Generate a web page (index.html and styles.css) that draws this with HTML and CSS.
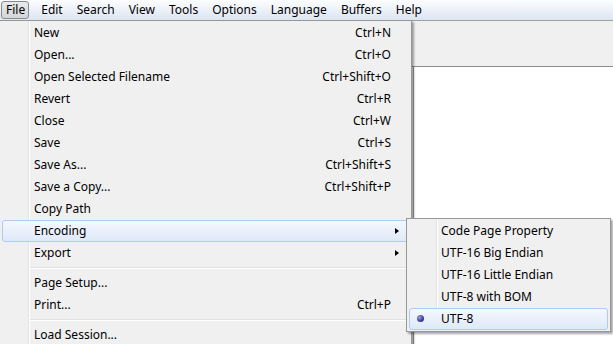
FILE: index.html
```html
<!DOCTYPE html>
<html lang="en">
<head>
    <meta charset="UTF-8">
    <title>SciTE - File menu</title>
    <link rel="stylesheet" href="styles.css">
</head>
<body>
    <div class="window">
        <!-- Menu bar -->
        <div class="menubar">
            <span class="menubar-item open">File</span>
            <span class="menubar-item">Edit</span>
            <span class="menubar-item">Search</span>
            <span class="menubar-item">View</span>
            <span class="menubar-item">Tools</span>
            <span class="menubar-item">Options</span>
            <span class="menubar-item">Language</span>
            <span class="menubar-item">Buffers</span>
            <span class="menubar-item">Help</span>
        </div>

        <!-- Area behind the menu -->
        <div class="workspace">
            <div class="toolbar"></div>
            <div class="editor">
                <div class="margin"></div>
                <div class="text-area"></div>
            </div>
        </div>

        <!-- File dropdown -->
        <div class="menu file-menu">
            <div class="menu-item"><span class="label">New</span><span class="shortcut">Ctrl+N</span></div>
            <div class="menu-item"><span class="label">Open...</span><span class="shortcut">Ctrl+O</span></div>
            <div class="menu-item"><span class="label">Open Selected Filename</span><span class="shortcut">Ctrl+Shift+O</span></div>
            <div class="menu-item"><span class="label">Revert</span><span class="shortcut">Ctrl+R</span></div>
            <div class="menu-item"><span class="label">Close</span><span class="shortcut">Ctrl+W</span></div>
            <div class="menu-item"><span class="label">Save</span><span class="shortcut">Ctrl+S</span></div>
            <div class="menu-item"><span class="label">Save As...</span><span class="shortcut">Ctrl+Shift+S</span></div>
            <div class="menu-item"><span class="label">Save a Copy...</span><span class="shortcut">Ctrl+Shift+P</span></div>
            <div class="menu-item"><span class="label">Copy Path</span></div>
            <div class="menu-item active"><span class="label">Encoding</span><span class="arrow"></span></div>
            <div class="menu-item"><span class="label">Export</span><span class="arrow"></span></div>
            <div class="separator"></div>
            <div class="menu-item"><span class="label">Page Setup...</span></div>
            <div class="menu-item"><span class="label">Print...</span><span class="shortcut">Ctrl+P</span></div>
            <div class="separator"></div>
            <div class="menu-item"><span class="label">Load Session...</span></div>
        </div>

        <!-- Encoding submenu -->
        <div class="menu sub-menu">
            <div class="menu-item"><span class="label">Code Page Property</span></div>
            <div class="menu-item"><span class="label">UTF-16 Big Endian</span></div>
            <div class="menu-item"><span class="label">UTF-16 Little Endian</span></div>
            <div class="menu-item"><span class="label">UTF-8 with BOM</span></div>
            <div class="menu-item active"><span class="radio"></span><span class="label">UTF-8</span></div>
        </div>
    </div>
</body>
</html>
```

FILE: styles.css
```css
body {
    margin: 0;
    font-family: "Noto Sans", "Open Sans", sans-serif;
    font-size: 12px;
    color: #000;
    background-color: #fff;
}

.window {
    position: relative;
    width: 613px;
    height: 344px;
    overflow: hidden;
}

/* Menu bar */

.menubar {
    display: flex;
    height: 20px;
    padding-left: 1px;
    background: linear-gradient(#fcfdfe, #dce5f3);
    box-sizing: border-box;
}

.menubar-item {
    display: flex;
    align-items: center;
    height: 18px;
    margin-top: 1px;
    padding: 0 6px 1px;
    border: 1px solid transparent;
    box-sizing: border-box;
    line-height: 1;
}

.menubar-item.open {
    border-color: #8a8b8d;
    border-radius: 3px;
    background: linear-gradient(#e8e9eb, #d3d5d8);
    padding: 0 3px 1px 4px;
    margin-right: 5px;
}

/* Workspace behind the menu */

.workspace {
    display: flex;
    flex-direction: column;
    height: 324px;
}

.toolbar {
    height: 45px;
    background-color: #f0f0f0;
    border-top: 1px solid #a0a0a0;
    border-bottom: 1px solid #8c8c8c;
}

.editor {
    display: flex;
    flex: 1;
}

.margin {
    width: 413px;
    background-color: #f0f0f0;
    border-right: 1px solid #9a9a9a;
}

.text-area {
    flex: 1;
    background-color: #fff;
}

/* Menus */

.menu {
    position: absolute;
    background-color: #f0f0f0;
    border: 1px solid #979797;
    padding: 1px 0;
    box-shadow: 2px 2px 2px rgba(0, 0, 0, 0.35);
    background-image: linear-gradient(90deg, transparent 28px, #e2e3e3 28px, #e2e3e3 29px, #fff 29px, #fff 30px, transparent 30px);
}

.file-menu {
    left: -1px;
    top: 20px;
    width: 411px;
    height: 340px;
}

.sub-menu {
    left: 406px;
    top: 218px;
    width: 203px;
    background-image: linear-gradient(90deg, transparent 29px, #e2e3e3 29px, #e2e3e3 30px, #fff 30px, #fff 31px, transparent 31px);
}

.menu-item {
    position: relative;
    display: flex;
    align-items: center;
    height: 22px;
    padding-left: 35px;
    padding-right: 17px;
    padding-bottom: 2px;
    margin: 0 2px;
    border: 1px solid transparent;
    border-radius: 3px;
    box-sizing: border-box;
}

.file-menu .menu-item {
    padding-left: 31px;
}

.sub-menu .menu-item {
    padding-left: 31px;
}

.menu-item.active {
    border-color: #aecbf0;
    background: linear-gradient(#f4f8fd, #dfe9f8);
}

.label {
    flex: 1;
    white-space: nowrap;
}

.shortcut {
    white-space: nowrap;
}

.arrow {
    position: absolute;
    right: 9px;
    top: 7px;
    width: 0;
    height: 0;
    border-top: 3.5px solid transparent;
    border-bottom: 3.5px solid transparent;
    border-left: 4px solid #000;
}

.separator {
    height: 1px;
    margin: 3px 2px 3px 30px;
    background-color: #e0e0e0;
    border-bottom: 1px solid #fff;
}

.radio {
    position: absolute;
    left: 7px;
    top: 6px;
    width: 7px;
    height: 7px;
    border-radius: 50%;
    background: radial-gradient(circle at 35% 35%, #9a9ce0, #3a3d9a 60%, #23256a);
}
```
